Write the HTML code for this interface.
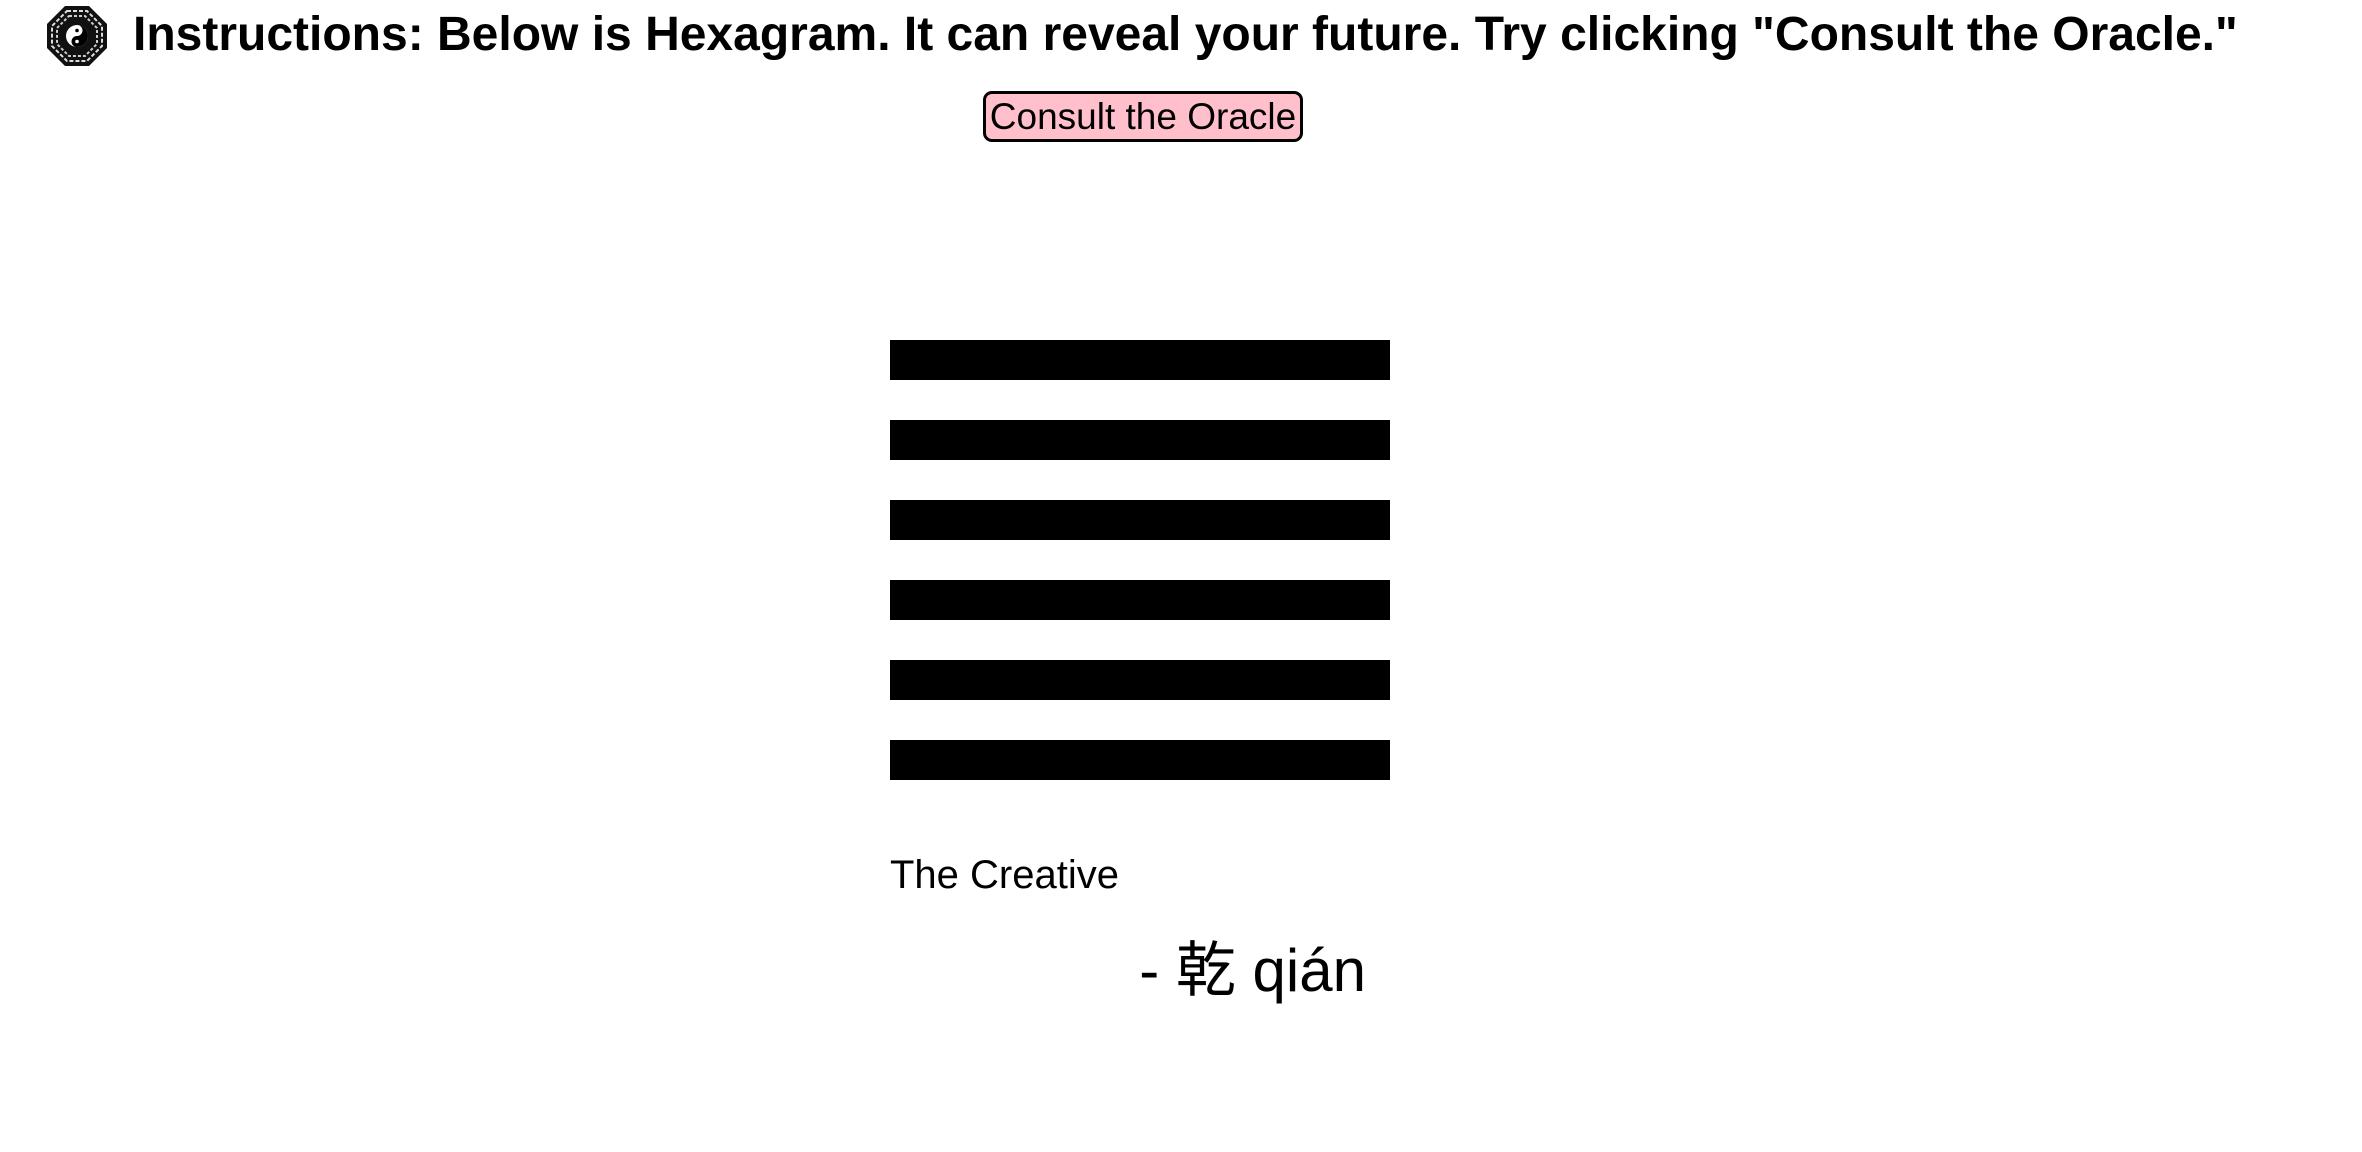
<!DOCTYPE html>
<html><head><meta charset="utf-8"><style>
body{margin:0;width:2362px;height:1152px;background:#fff;position:relative;overflow:hidden;font-family:"Liberation Sans","Noto Sans CJK SC",sans-serif;color:#000}
.h{position:absolute;left:133px;top:5px;font-weight:bold;font-size:48px;white-space:nowrap;line-height:60px}
.btn{position:absolute;left:983px;top:91px;width:314px;height:45px;background:#ffc0cb;border:3px solid #000;border-radius:9px;font-size:37px;line-height:45px;text-align:center;white-space:nowrap}
.bar{position:absolute;left:890px;width:500px;height:40px;background:#000}
.t{position:absolute;left:890px;top:853px;font-size:40px;white-space:nowrap}
.q{position:absolute;right:996px;top:936px;font-size:60px;line-height:70px;white-space:nowrap}
</style></head><body>
<svg style="position:absolute;left:46px;top:5px" width="62" height="62" viewBox="0 0 62 62">
<polygon points="19,1 43,1 61,19 61,43 43,61 19,61 1,43 1,19" fill="#111"/>
<polygon points="21,6 41,6 56,21 56,41 41,56 21,56 6,41 6,21" fill="none" stroke="#ddd" stroke-width="2" stroke-dasharray="4 2"/>
<polygon points="23,11 39,11 51,23 51,39 39,51 23,51 11,39 11,23" fill="none" stroke="#ccc" stroke-width="2" stroke-dasharray="3 2"/>
<circle cx="31" cy="31" r="11" fill="#fff"/>
<path d="M31 20a11 11 0 0 1 0 22a5.5 5.5 0 0 1 0-11a5.5 5.5 0 0 0 0-11z" fill="#000"/>
<circle cx="31" cy="25.5" r="1.8" fill="#000"/><circle cx="31" cy="36.5" r="1.8" fill="#fff"/>
</svg>
<div class="h">Instructions: Below is Hexagram. It can reveal your future. Try clicking "Consult the Oracle."</div>
<div class="btn">Consult the Oracle</div>
<div class="bar" style="top:340px"></div>
<div class="bar" style="top:420px"></div>
<div class="bar" style="top:500px"></div>
<div class="bar" style="top:580px"></div>
<div class="bar" style="top:660px"></div>
<div class="bar" style="top:740px"></div>
<div class="t">The Creative</div>
<div class="q">- 乾 qián</div>
</body></html>
